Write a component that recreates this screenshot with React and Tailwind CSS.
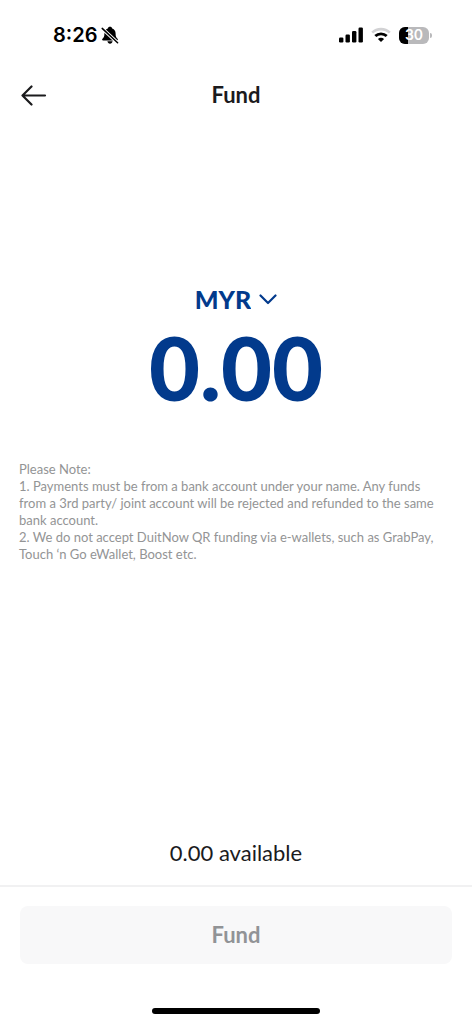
import { useState } from 'react';

const NOTES = [
  'Payments must be from a bank account under your name. Any funds from a 3rd party/ joint account will be rejected and refunded to the same bank account.',
  'We do not accept DuitNow QR funding via e-wallets, such as GrabPay, Touch ‘n Go eWallet, Boost etc.',
];

function App() {
  const [currency, setCurrency] = useState('MYR');
  const [amount, setAmount] = useState('0.00');

  return (
    <div className="flex min-h-screen flex-col bg-white font-['Lato',sans-serif] text-[#1b1b1d]">
      <StatusBar />

      <header className="grid h-[50px] grid-cols-[40px_1fr_40px] items-center px-5">
        <button type="button" aria-label="Back">
          <ArrowIcon />
        </button>
        <h1 className="text-center text-[22px] leading-6 font-bold">Fund</h1>
      </header>

      <main className="flex flex-1 flex-col px-[19px] pt-[164px] pb-5">
        {/* Currency */}
        <div className="flex justify-center">
          <label className="flex h-[30px] items-center gap-2 text-[#023a8c]">
            <select
              aria-label="Currency"
              value={currency}
              onChange={(e) => setCurrency(e.target.value)}
              className="field-sizing-content appearance-none bg-transparent text-[25px] leading-[30px] font-black outline-none"
            >
              <option>MYR</option>
              <option>USD</option>
            </select>
            <ChevronIcon />
          </label>
        </div>

        {/* Amount */}
        <input
          aria-label="Amount"
          inputMode="decimal"
          value={amount}
          onChange={(e) => setAmount(e.target.value)}
          className="mt-2 h-[90px] w-full text-center text-[88px] leading-[90px] font-black text-[#023a8c] outline-none"
        />

        <div className="mt-[49px] pr-1 text-[13px] leading-[17px] text-[#939495]">
          <p>Please Note:</p>
          {NOTES.map((note, i) => (
            <p key={i}>{`${i + 1}. ${note}`}</p>
          ))}
        </div>

        <p className="mt-auto text-center text-[22px] leading-6">0.00 available</p>
      </main>

      <footer className="border-t-2 border-[#f1f1f2] px-5 pt-[19px] pb-[10px]">
        <button
          type="button"
          disabled
          className="h-[58px] w-full rounded-lg bg-[#f8f8f9] text-[22px] leading-6 font-bold text-[#919396]"
        >
          Fund
        </button>
        <div className="mx-auto mt-[44px] h-[6px] w-[168px] rounded-full bg-black" />
      </footer>
    </div>
  );
}

function StatusBar() {
  return (
    <div className="flex h-[70px] items-center justify-between pr-10 pl-[53px] text-black">
      <div className="flex items-center gap-1">
        <span className="font-['Inter',sans-serif] text-[20px] leading-6 font-semibold">8:26</span>
        <BellOffIcon />
      </div>
      <div className="flex items-center gap-2">
        <SignalIcon />
        <WifiIcon />
        <Battery level={30} />
      </div>
    </div>
  );
}

function Battery({ level }) {
  return (
    <div className="flex items-center gap-px">
      <div className="relative flex h-[17px] w-[30px] items-center justify-center overflow-hidden rounded-md bg-[#b9b9bb]">
        <div className="absolute inset-y-0 left-0 bg-black" style={{ width: `${level}%` }} />
        <span className="relative font-['Inter',sans-serif] text-[14px] leading-4 font-semibold text-white">{level}</span>
      </div>
      <div className="h-[5px] w-[2px] rounded-r-full bg-[#b9b9bb]" />
    </div>
  );
}

function BellOffIcon() {
  return (
    <svg width="18" height="19" viewBox="0 0 18 19" aria-hidden="true">
      <path
        d="M9 .8C7.800.8 7 1.500 6.800 2.400 4.500 3.200 3.400 5 3.400 7.400c0 3-.5 4-1.900 5.300-.7.700-.5 1.700.6 1.700h13.800c1.100 0 1.300-1 .6-1.700-1.400-1.300-1.900-2.300-1.900-5.300 0-2.400-1.100-4.200-3.400-5C11 1.500 10.200.8 9 .8Z"
        fill="currentColor"
      />
      <path d="M6.400 15.300h5.200c-.3 1.600-1.300 2.400-2.600 2.400s-2.300-.8-2.600-2.400Z" fill="currentColor" />
      <path d="M1.200 2.400 16.600 16.800" stroke="#fff" strokeWidth="3.400" />
      <path d="M1.200 2.400 16.600 16.800" stroke="currentColor" strokeWidth="1.500" strokeLinecap="round" />
    </svg>
  );
}

function SignalIcon() {
  return (
    <svg width="24" height="16" viewBox="0 0 24 16" fill="currentColor" aria-hidden="true">
      <rect x="0" y="10.500" width="4.400" height="5" rx="1.200" />
      <rect x="6.500" y="7.500" width="4.400" height="8" rx="1.200" />
      <rect x="13" y="4" width="4.400" height="11.500" rx="1.200" />
      <rect x="19.500" y="0.500" width="4.400" height="15" rx="1.200" />
    </svg>
  );
}

function WifiIcon() {
  return (
    <svg width="20" height="16" viewBox="0 0 20 16" fill="none" aria-hidden="true">
      <path d="M1.200 5.600C6 .9 14 .9 18.800 5.600" stroke="#d2d2d4" strokeWidth="2.600" />
      <path d="M4.300 9.100c3.200-3.100 8.200-3.100 11.400 0" stroke="currentColor" strokeWidth="2.800" />
      <path d="M10 15 6.900 11.900c1.700-1.600 4.500-1.600 6.200 0Z" fill="currentColor" />
    </svg>
  );
}

function ArrowIcon() {
  return (
    <svg
      width="27"
      height="22"
      viewBox="0 0 27 22"
      fill="none"
      stroke="currentColor"
      strokeWidth="2.200"
      strokeLinecap="round"
      strokeLinejoin="round"
      aria-hidden="true"
    >
      <path d="M25 11.500H2.500M11.500 2.500l-9 9 9 9" />
    </svg>
  );
}

function ChevronIcon() {
  return (
    <svg
      width="18"
      height="12"
      viewBox="0 0 18 12"
      fill="none"
      stroke="currentColor"
      strokeWidth="2.200"
      strokeLinecap="round"
      strokeLinejoin="round"
      aria-hidden="true"
    >
      <path d="m1.500 2.500 7.500 7.500 7.500-7.500" />
    </svg>
  );
}

export default App;
